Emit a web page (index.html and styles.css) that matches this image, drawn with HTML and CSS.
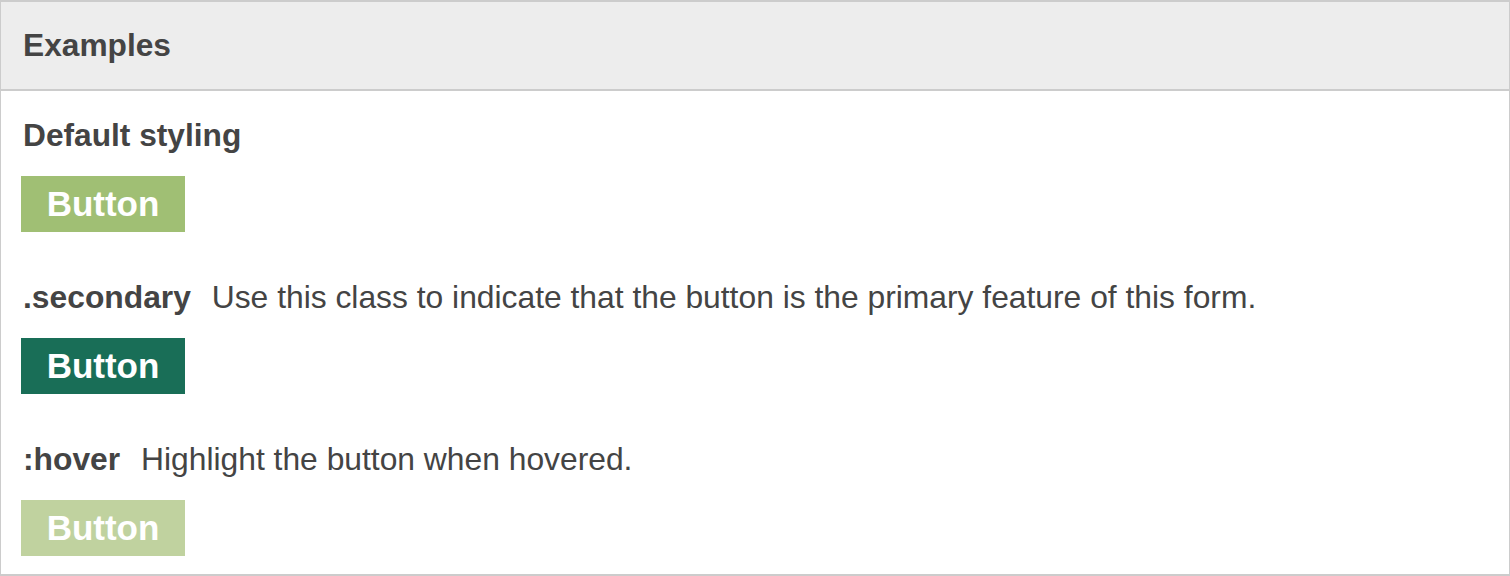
FILE: index.html
```html
<!DOCTYPE html>
<html lang="en">
  <head>
    <meta charset="UTF-8" />
    <meta name="viewport" content="width=device-width, initial-scale=1.0" />
    <title>Button - Examples</title>
    <link rel="stylesheet" href="styles.css">
  </head>
  <body>
    <div class="panel">
      <div class="panel-header">
        <h2>Examples</h2>
      </div>

      <div class="panel-body">
        <div class="example">
          <h3>Default styling</h3>
          <button class="btn">Button</button>
        </div>

        <div class="example">
          <p class="modifier">
            <span class="modifier-name">.secondary</span>
            <span class="modifier-desc">Use this class to indicate that the button is the primary feature of this form.</span>
          </p>
          <button class="btn secondary">Button</button>
        </div>

        <div class="example">
          <p class="modifier">
            <span class="modifier-name">:hover</span>
            <span class="modifier-desc">Highlight the button when hovered.</span>
          </p>
          <button class="btn hover">Button</button>
        </div>
      </div>
    </div>
  </body>
</html>
```

FILE: styles.css
```css
* {
  margin: 0;
  padding: 0;
  box-sizing: border-box;
  font-family: "Liberation Sans", Helvetica, Arial, sans-serif;
}

body {
  background-color: white;
  color: #444;
}

.panel {
  border: 1px solid #ccc;
  border-top-width: 2px;
  border-bottom-width: 2px;
  height: 576px;
}

.panel-header {
  background-color: #ededed;
  border-bottom: 2px solid #ccc;
  height: 89px;
  padding: 23px 22px 0;
}

h2,
h3 {
  font-size: 31.7px;
  line-height: 40px;
  font-weight: bold;
}

.panel-body {
  padding: 24px 20px 0;
}

.example {
  display: flex;
  flex-direction: column;
  align-items: flex-start;
  gap: 21px;
  margin-bottom: 45px;
}

.example:last-child {
  margin-bottom: 0;
}

h3,
.modifier {
  padding-left: 2px;
}

.modifier {
  font-size: 31.8px;
  line-height: 40px;
}

.modifier-name {
  font-weight: bold;
  margin-right: 12px;
}

.btn {
  background-color: #a0bf74;
  color: white;
  border: none;
  width: 164px;
  height: 56px;
  font-size: 35px;
  line-height: 56px;
  font-weight: bold;
  padding: 0;
  cursor: pointer;
}

.secondary {
  background-color: #196e57;
}

.hover {
  background-color: #c0d29f;
}
```
